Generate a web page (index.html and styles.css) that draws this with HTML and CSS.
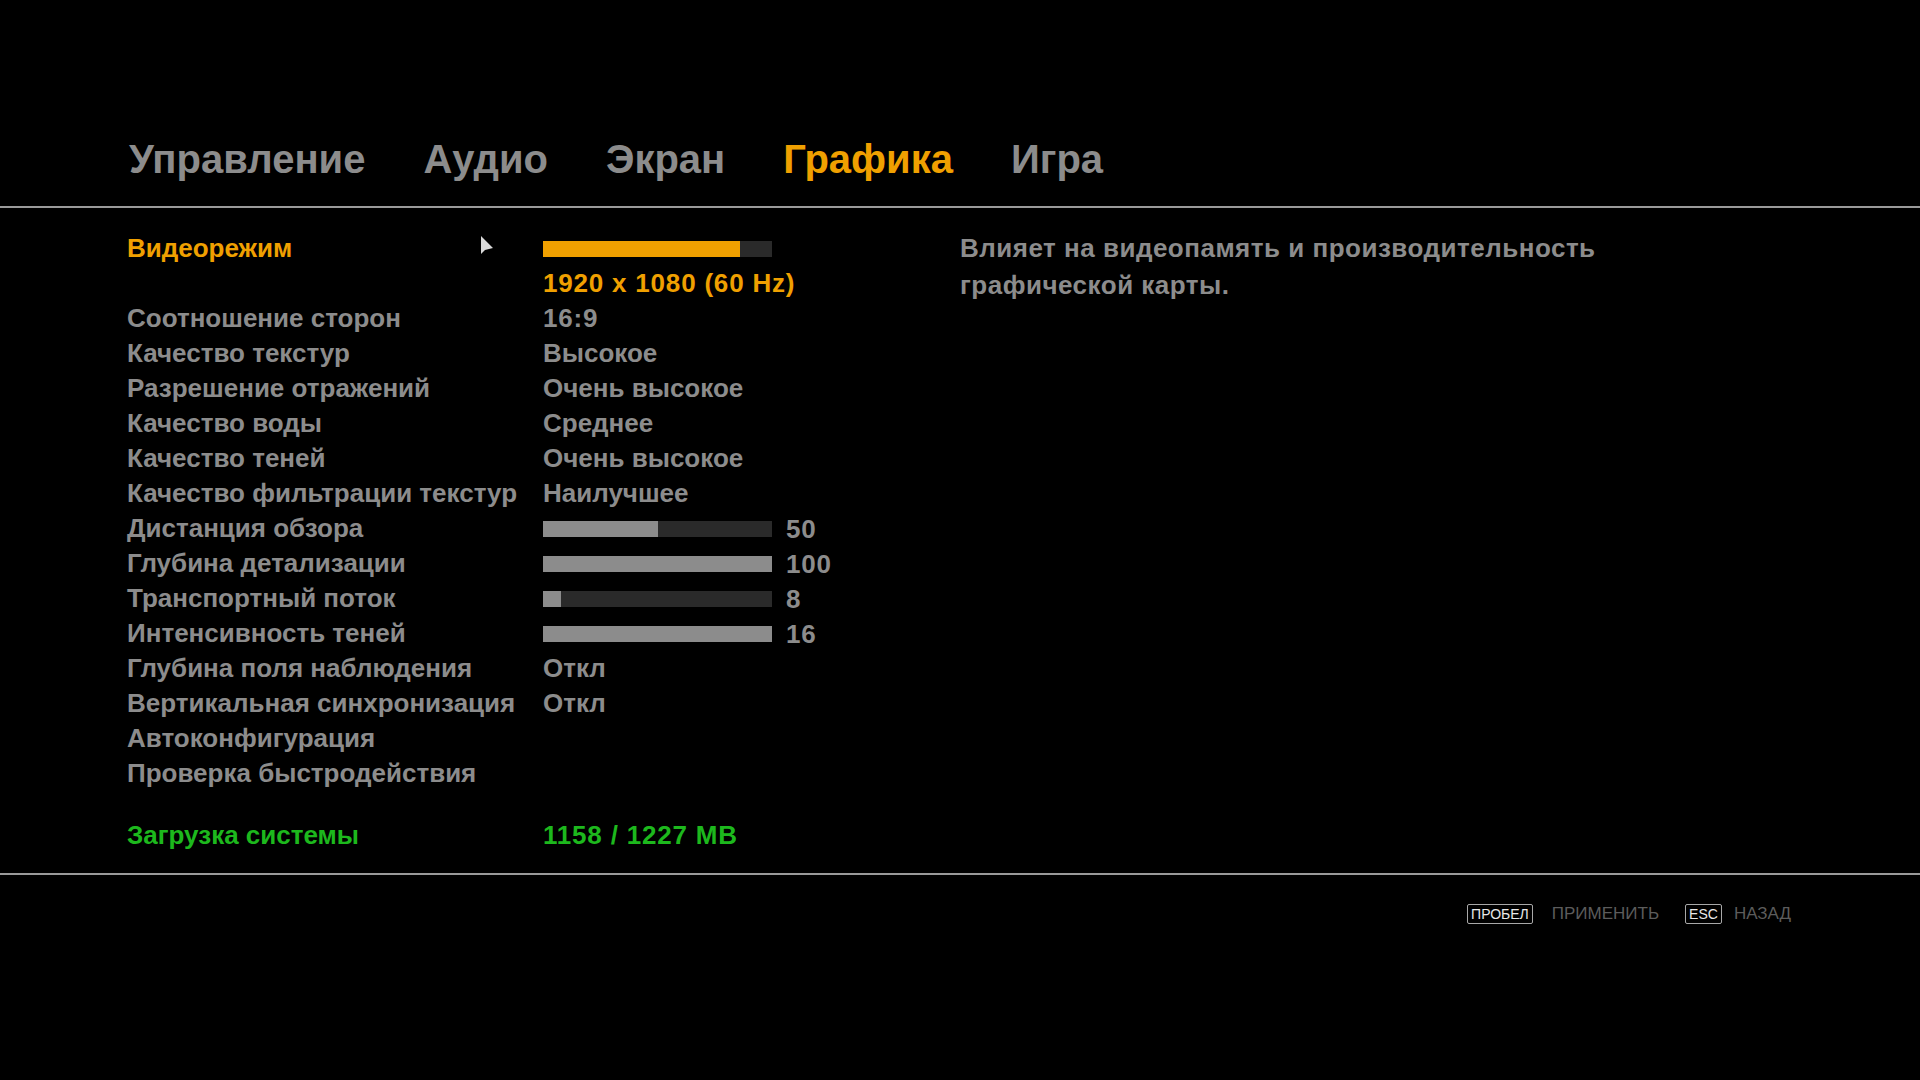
FILE: index.html
```html
<!DOCTYPE html>
<html lang="ru">
<head>
<meta charset="utf-8">
<title>Графика</title>
<link rel="stylesheet" href="styles.css">
</head>
<body>
<div class="screen">
  <nav class="tabs">
    <span class="tab">Управление</span>
    <span class="tab">Аудио</span>
    <span class="tab">Экран</span>
    <span class="tab active">Графика</span>
    <span class="tab">Игра</span>
  </nav>

  <main class="main">
    <section class="settings">
      <div class="row selected">
        <span class="label">Видеорежим</span>
        <span class="bar bar-orange"><span class="fill" style="width:86%"></span></span>
      </div>
      <div class="row selected">
        <span class="label"></span>
        <span class="value numeric">1920 x 1080 (60 Hz)</span>
      </div>
      <div class="row"><span class="label">Соотношение сторон</span><span class="value numeric">16:9</span></div>
      <div class="row"><span class="label">Качество текстур</span><span class="value">Высокое</span></div>
      <div class="row"><span class="label">Разрешение отражений</span><span class="value">Очень высокое</span></div>
      <div class="row"><span class="label">Качество воды</span><span class="value">Среднее</span></div>
      <div class="row"><span class="label">Качество теней</span><span class="value">Очень высокое</span></div>
      <div class="row"><span class="label">Качество фильтрации текстур</span><span class="value">Наилучшее</span></div>
      <div class="row"><span class="label">Дистанция обзора</span><span class="bar"><span class="fill" style="width:50%"></span></span><span class="num">50</span></div>
      <div class="row"><span class="label">Глубина детализации</span><span class="bar"><span class="fill" style="width:100%"></span></span><span class="num">100</span></div>
      <div class="row"><span class="label">Транспортный поток</span><span class="bar"><span class="fill" style="width:8%"></span></span><span class="num">8</span></div>
      <div class="row"><span class="label">Интенсивность теней</span><span class="bar"><span class="fill" style="width:100%"></span></span><span class="num">16</span></div>
      <div class="row"><span class="label">Глубина поля наблюдения</span><span class="value">Откл</span></div>
      <div class="row"><span class="label">Вертикальная синхронизация</span><span class="value">Откл</span></div>
      <div class="row"><span class="label">Автоконфигурация</span></div>
      <div class="row"><span class="label">Проверка быстродействия</span></div>
      <div class="row system"><span class="label">Загрузка системы</span><span class="value numeric">1158 / 1227 MB</span></div>
    </section>
    <aside class="description">Влияет на видеопамять и производительность графической карты.</aside>
  </main>

  <footer class="footer">
    <span class="key">ПРОБЕЛ</span><span class="hint hint-apply">ПРИМЕНИТЬ</span>
    <span class="key">ESC</span><span class="hint hint-back">НАЗАД</span>
  </footer>

  <svg class="cursor" width="16" height="24" viewBox="0 0 16 24" aria-hidden="true">
    <path d="M1 1 L1 19 L5 15 L13 13 Z" fill="#d9d9d9"/>
  </svg>
</div>
</body>
</html>
```

FILE: styles.css
```css
html, body {
  margin: 0;
  padding: 0;
  background: #000;
}

.screen {
  position: relative;
  width: 1920px;
  height: 1080px;
  background: #000;
  font-family: "Liberation Sans", Arial, sans-serif;
  font-weight: bold;
  color: #8c8c8c;
  overflow: hidden;
}

.tabs {
  display: flex;
  gap: 58px;
  padding: 139px 0 27px 129px;
  border-bottom: 2px solid #9a9a9a;
  font-size: 40px;
  line-height: 40px;
}

.tab {
  color: #8c8c8c;
}

.tab.active {
  color: #f0a000;
}

.main {
  display: flex;
  padding: 23px 0 0 127px;
  font-size: 26px;
}

.settings {
  width: 833px;
  flex: none;
}

.row {
  display: flex;
  align-items: flex-start;
  height: 35px;
  line-height: 35px;
  white-space: nowrap;
}

.label {
  width: 416px;
  flex: none;
}

.value {
  color: #8c8c8c;
}

.numeric {
  letter-spacing: 0.8px;
}

.selected .label,
.selected .value {
  color: #f0a000;
}

.bar {
  display: block;
  width: 229px;
  height: 16px;
  margin-top: 10px;
  background: #2a2a2a;
  flex: none;
}

.bar .fill {
  display: block;
  height: 100%;
  background: #8c8c8c;
}

.bar-orange .fill {
  background: #f0a000;
}

.num {
  margin-left: 14px;
  margin-top: 1px;
  letter-spacing: 0.8px;
}

.row.system {
  margin-top: 27px;
}

.row.system .label,
.row.system .value {
  color: #1db81d;
}

.description {
  width: 720px;
  line-height: 37px;
  margin-top: -1px;
  letter-spacing: 0.5px;
  color: #8c8c8c;
}

.footer {
  display: flex;
  align-items: center;
  justify-content: flex-end;
  margin-top: 20px;
  border-top: 2px solid #9a9a9a;
  padding: 29px 129px 0 0;
  font-weight: normal;
}

.key {
  display: inline-block;
  height: 18px;
  line-height: 18px;
  padding: 0 3px;
  border: 1px solid #a8a8a8;
  border-radius: 2px;
  font-size: 14px;
  color: #e8e8e8;
}

.hint {
  font-size: 17px;
  color: #5c5c5c;
}

.hint-apply {
  margin-left: 19px;
  margin-right: 26px;
}

.hint-back {
  margin-left: 12px;
}

.cursor {
  position: absolute;
  left: 480px;
  top: 235px;
}
```
